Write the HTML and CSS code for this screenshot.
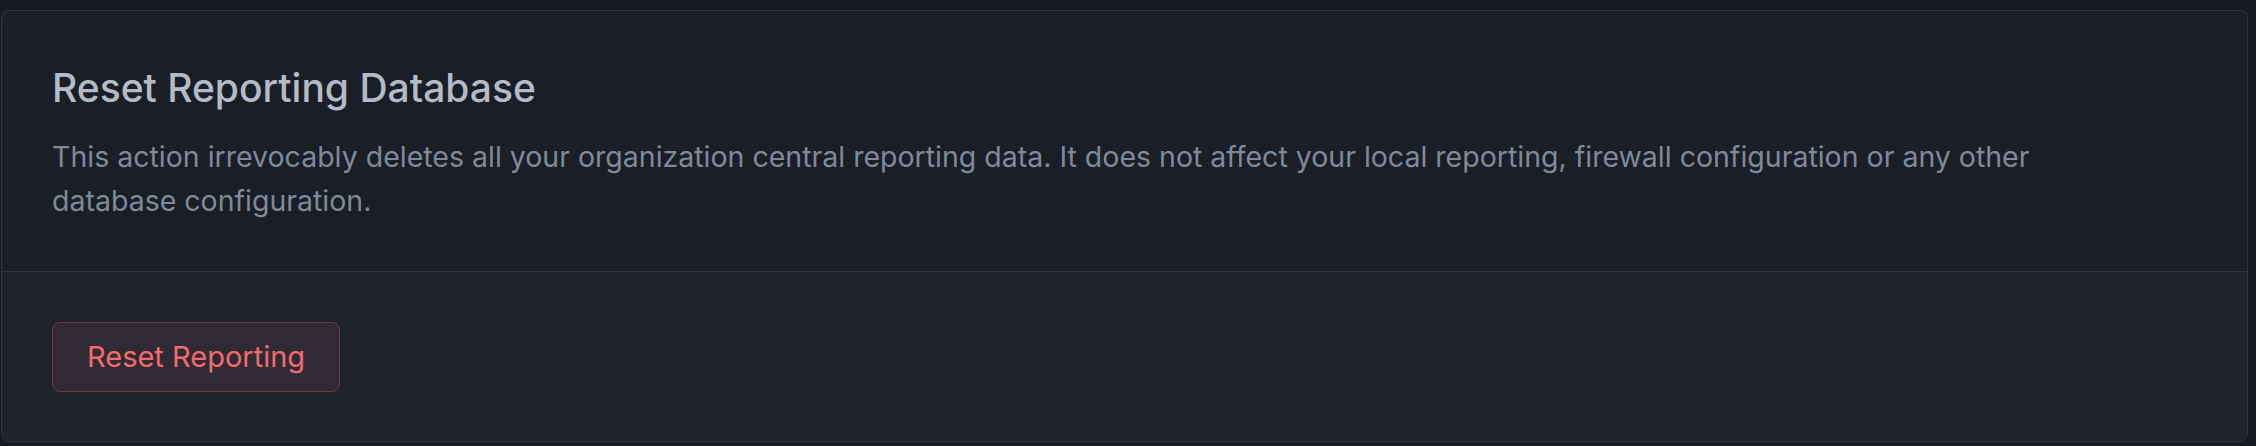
FILE: index.html
```html
<!DOCTYPE html>
<html lang="en">
<head>
  <meta charset="UTF-8">
  <title>Reset Reporting Database</title>
  <link rel="stylesheet" href="styles.css">
</head>
<body>

  <!-- Danger zone card -->
  <div class="page">
    <section class="card">
      <div class="card-body">
        <h2 class="card-title">Reset Reporting Database</h2>
        <p class="card-text">This action irrevocably deletes all your organization central reporting data. It does not affect your local reporting, firewall configuration or any other database configuration.</p>
      </div>
      <div class="card-footer">
        <button class="btn-danger" type="button">Reset Reporting</button>
      </div>
    </section>
  </div>

</body>
</html>
```

FILE: styles.css
```css
/* Global */
body {
  margin: 0;
  padding: 0;
  background-color: #161b22;
  font-family: Inter, "Noto Sans", sans-serif;
}

.page {
  padding: 10px 8px 4px 1px;
}

/* Card */
.card {
  border: 1px solid #2c3543;
  border-radius: 8px;
  overflow: hidden;
  background-color: #191e27;
}

.card-body {
  padding: 53px 50px 48px 50px;
  border-bottom: 1px solid #2c3543;
}

.card-title {
  margin: 0 0 23px 0;
  font-size: 39px;
  line-height: 48px;
  font-weight: 500;
  color: #b4bbc6;
}

.card-text {
  margin: 0;
  max-width: 2080px;
  font-size: 28.5px;
  line-height: 44px;
  color: #7f8a98;
}

/* Footer with action */
.card-footer {
  padding: 50px 50px 49px 50px;
  background-color: #1e232e;
}

.btn-danger {
  font-family: inherit;
  font-size: 29px;
  line-height: 36px;
  padding: 16px 34px;
  color: #f26b6b;
  background-color: #302a34;
  border: 1px solid #6e3b42;
  border-radius: 8px;
  cursor: pointer;
}
```
